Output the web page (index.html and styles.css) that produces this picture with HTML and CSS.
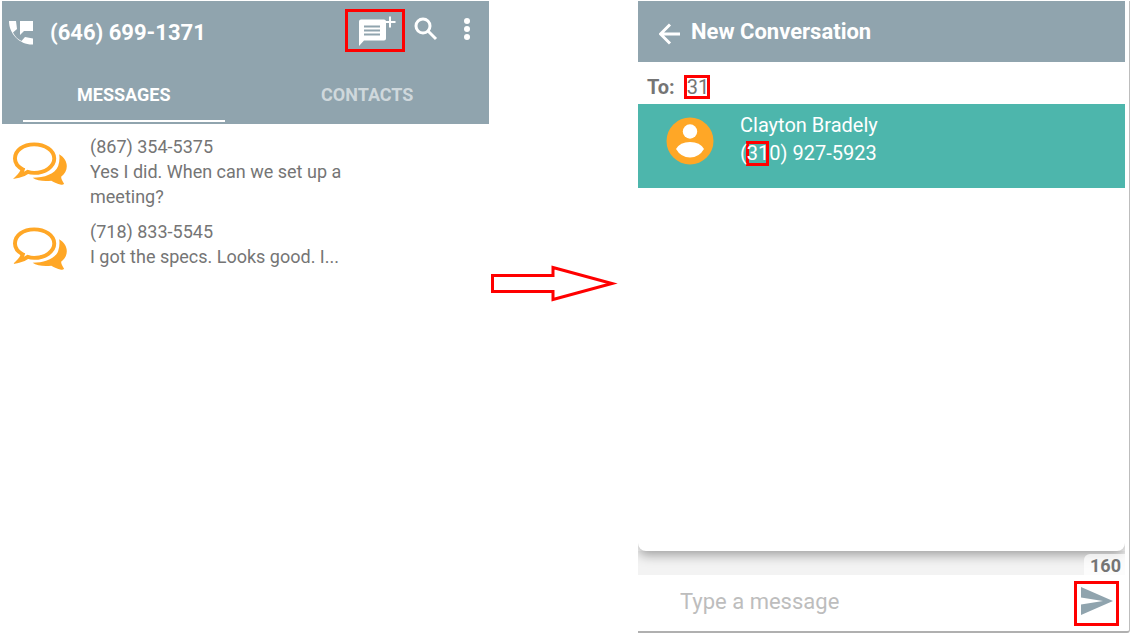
FILE: index.html
```html
<!DOCTYPE html>
<html lang="en">
    <head>
        <meta charset="utf-8">
        <title>New Conversation</title>
        <link rel="stylesheet" href="styles.css">
    </head>
    <body>
        <div class="panel messages">
            <header class="topBar">
                <svg class="phone" viewBox="0 0 24 24"><path d="M0 0H7L8 8L4 11.500C6 15.500 9 18.500 12.500 20L16 16L24 17.500V23.500C11 24 0 13 0 0ZM11 0H24V10H15L11 14Z"/></svg>
                <h1>(646) 699-1371</h1>
                <button class="btn newMessage marked" aria-label="New message">
                    <svg viewBox="0 0 38 30"><path d="M4 3.500H25Q27 3.500 27 5.500V22.500Q27 24.500 25 24.500H5L0 30V5.500Q0 3.500 2 3.500Z"/><path class="lines" d="M5 10.500H21M5 14.500H21M5 18.500H21"/><path class="plus" d="M31 0.500V11.500M25.500 6H36.500"/></svg>
                </button>
                <button class="btn search" aria-label="Search">
                    <svg viewBox="0 0 24 24"><circle cx="9" cy="9" r="7"/><path d="M14 14L22 22"/></svg>
                </button>
                <button class="btn more" aria-label="More">
                    <svg viewBox="0 0 6 22"><circle cx="3" cy="3" r="3"/><circle cx="3" cy="11" r="3"/><circle cx="3" cy="19" r="3"/></svg>
                </button>
            </header>
            <nav class="tabs">
                <a class="tab active" href="#messages">MESSAGES</a>
                <a class="tab" href="#contacts">CONTACTS</a>
            </nav>
            <svg class="hidden">
                <symbol id="chat" viewBox="0 0 56 44">
                    <path class="bubbleBack" d="M47 12C57 18 57 29 49 35C49 38 51 40 52 42Q51 43.500 49 43C45 42 42 41 39 39C32 40 24 39 20 36C32 36 43 32 46 24Q48 18 47 12Z"/>
                    <path class="bubbleFront" d="M21.500 2C32.500 2 42 8.200 42 16.500S32.500 31 21.500 31Q18 31 15 30Q11 33 6 34Q9 31 10 27.500C5 25 2 21 2 16.500C2 8.200 10.500 2 21.500 2Z"/>
                </symbol>
            </svg>
            <ul class="list">
                <li class="item">
                    <svg class="chat"><use href="#chat"/></svg>
                    <div class="text">
                        <p>(867) 354-5375</p>
                        <p>Yes I did. When can we set up a meeting?</p>
                    </div>
                </li>
                <li class="item">
                    <svg class="chat"><use href="#chat"/></svg>
                    <div class="text">
                        <p>(718) 833-5545</p>
                        <p>I got the specs. Looks good. I...</p>
                    </div>
                </li>
            </ul>
        </div>

        <div class="step">
            <svg viewBox="0 0 130 38"><path d="M2.500 10.500H63V2.500L122 18.500L63 34.500V26.500H2.500Z"/></svg>
        </div>

        <div class="panel conversation">
            <header class="topBar">
                <button class="btn back" aria-label="Back">
                    <svg viewBox="0 0 22 22"><path d="M21 11H2M11 1.500L1.500 11L11 20.500"/></svg>
                </button>
                <h1>New Conversation</h1>
            </header>
            <div class="dropdown">
                <div class="to">
                    <label for="to">To:</label>
                    <input class="marked" type="text" id="to" value="31">
                </div>
                <div class="contact">
                    <svg class="avatar" viewBox="0 0 48 48"><circle class="disc" cx="24" cy="24" r="23.500"/><circle cx="24" cy="14.500" r="7.200"/><path d="M10 32Q14 25 24 25T38 32Q33 40.500 24 40.500T10 32Z"/></svg>
                    <div>
                        <p>Clayton Bradely</p>
                        <p>(<span class="match">31</span>0) 927-5923</p>
                    </div>
                </div>
            </div>
            <div class="counter"><span>160</span></div>
            <form class="compose">
                <input type="text" aria-label="Message" placeholder="Type a message">
                <button class="btn send marked" type="button" aria-label="Send">
                    <svg viewBox="0 0 32 28"><path d="M0 0L32 14L0 28V17.500L22 14L0 10.500Z"/></svg>
                </button>
            </form>
        </div>
    </body>
</html>
```
FILE: styles.css
```css
* {
    box-sizing: border-box;
}
body {
    display: grid;
    grid-template-columns: 487fr 149px 492fr;
    min-height: 100vh;
    margin: 0;
    padding: 1px 12px 2px 2px;
    background-color: #fff;
    font-family: Roboto, "Liberation Sans", sans-serif;
    color: #757575;
}
h1, p, ul {
    margin: 0;
    padding: 0;
}
h1 {
    font-size: 22px;
    line-height: 26px;
    font-weight: 700;
    color: #fff;
}
.hidden {
    position: absolute;
    width: 0;
    height: 0;
}
.btn {
    display: flex;
    align-items: center;
    justify-content: center;
    padding: 0;
    border: 0;
    background: none;
}
.btn svg, .phone {
    fill: #fff;
    stroke: none;
}
.marked {
    border: 3px solid #f00;
}
.topBar {
    display: flex;
    align-items: center;
    background-color: #90a4ae;
}

/* messages */
.messages .topBar {
    height: 61px;
    padding: 0 19px 2px 7px;
}
.messages h1 {
    flex: 1;
    margin-left: 17px;
    padding-top: 4px;
}
.phone {
    width: 24px;
    height: 24px;
    margin-top: 5px;
}
.newMessage {
    width: 60px;
    height: 43px;
    padding-left: 5px;
}
.newMessage svg {
    width: 38px;
    height: 30px;
}
.newMessage .lines {
    stroke: #90a4ae;
    stroke-width: 2;
}
.newMessage .plus {
    stroke: #fff;
    stroke-width: 2;
}
.search {
    margin-left: 9px;
    padding-bottom: 3px;
}
.search svg {
    width: 24px;
    height: 24px;
    fill: none;
    stroke: #fff;
    stroke-width: 3;
}
.more {
    margin-left: 26px;
    padding-bottom: 3px;
}
.more svg {
    width: 6px;
    height: 22px;
}
.tabs {
    display: grid;
    grid-template-columns: 1fr 1fr;
    height: 62px;
    padding-bottom: 2px;
    background-color: #90a4ae;
}
.tab {
    margin: 0 21px;
    padding-top: 22px;
    font-size: 18px;
    line-height: 22px;
    font-weight: 700;
    text-align: center;
    text-decoration: none;
    color: #cfd8dc;
}
.tab.active {
    color: #fff;
    border-bottom: 2px solid #fff;
}
.list {
    list-style: none;
    padding: 10px 11px;
}
.item {
    display: flex;
    gap: 22px;
    margin-bottom: 10px;
    font-size: 18px;
    line-height: 25px;
}
.text {
    width: 262px;
}
.chat {
    width: 55px;
    height: 44px;
    margin-top: 8px;
}
.bubbleBack {
    fill: #ffa726;
}
.bubbleFront {
    fill: #fff;
    stroke: #ffa726;
    stroke-width: 4;
}

/* arrow between the two screens */
.step {
    display: flex;
    align-items: flex-start;
    padding-top: 264px;
}
.step svg {
    width: 130px;
    height: 38px;
    margin-left: 1px;
    fill: #fff;
    stroke: #f00;
    stroke-width: 3;
}

/* conversation */
.conversation {
    display: flex;
    flex-direction: column;
    padding-right: 4px;
    border-right: 1px solid #bdbdbd;
    border-bottom: 2px solid #b0b0b0;
    border-bottom-right-radius: 3px;
}
.conversation .topBar {
    height: 61px;
    padding-left: 21px;
}
.back {
    margin-top: 4px;
}
.back svg {
    width: 22px;
    height: 22px;
    fill: none;
    stroke: #fff;
    stroke-width: 3;
}
.conversation h1 {
    margin-left: 10px;
}
.dropdown {
    position: relative;
    flex: 1;
    border-radius: 0 0 8px 8px;
    background-color: #fff;
    box-shadow: 0 4px 12px rgba(0, 0, 0, 0.35);
    clip-path: inset(0 0 -24px 0);
}
.to {
    display: flex;
    align-items: center;
    gap: 9px;
    height: 42px;
    padding: 8px 9px 0;
    font-size: 20px;
}
.to label {
    font-weight: 700;
}
.to input {
    width: 26px;
    height: 24px;
    padding: 0;
    font: 20px Roboto, "Liberation Sans", sans-serif;
    color: #757575;
}
.contact {
    display: flex;
    align-items: flex-start;
    gap: 26px;
    height: 84px;
    padding: 7px 28px;
    font-size: 20px;
    line-height: 28px;
    color: #fff;
    background-color: #4db6ac;
    isolation: isolate;
}
.avatar {
    width: 48px;
    height: 48px;
    margin-top: 6px;
    fill: #fff;
}
.disc {
    fill: #ffa726;
}
.match {
    position: relative;
}
.match::after {
    content: "";
    position: absolute;
    z-index: -1;
    inset: 0 0 -1px -1px;
    border: 3px solid #f00;
}
.counter {
    display: flex;
    justify-content: flex-end;
    height: 24px;
    background-color: #f3f3f3;
}
.counter span {
    position: relative;
    margin-top: 3px;
    padding: 0 4px 0 6px;
    font-size: 18px;
    line-height: 24px;
    font-weight: 700;
    border-top-left-radius: 6px;
    background-color: rgba(255, 255, 255, 0.7);
}
.compose {
    display: flex;
    align-items: center;
    height: 56px;
    padding: 0 6px 0 42px;
}
.compose input {
    flex: 1;
    min-width: 0;
    padding: 0 0 4px;
    border: 0;
    font: 22px Roboto, "Liberation Sans", sans-serif;
}
.compose input::placeholder {
    color: #bdbdbd;
}
.send {
    width: 45px;
    height: 45px;
}
.send svg {
    width: 32px;
    height: 28px;
    margin-bottom: 4px;
    fill: #90a4ae;
}
```
